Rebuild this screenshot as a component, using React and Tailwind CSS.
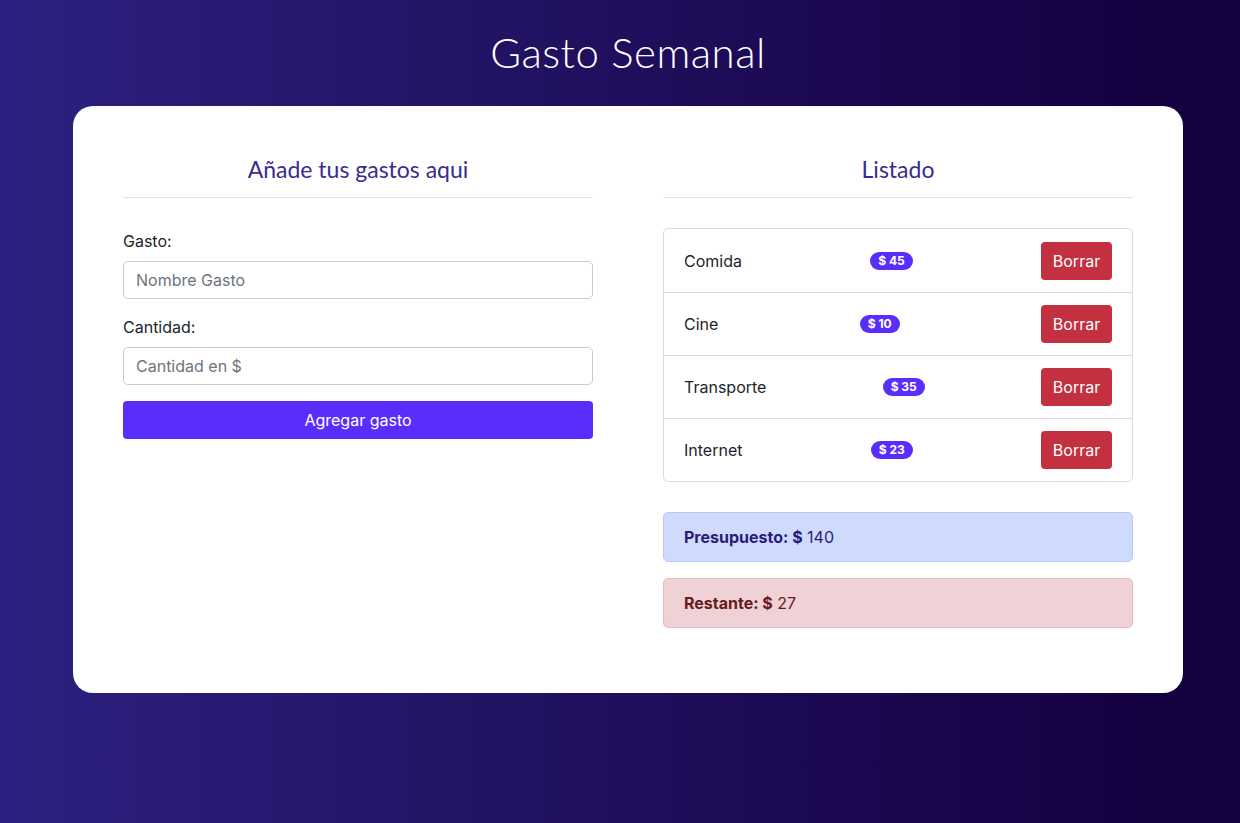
export default function App() {
  const items = [
    { n: "Comida", v: 45 },
    { n: "Cine", v: 10 },
    { n: "Transporte", v: 35 },
    { n: "Internet", v: 23 },
  ];
  const body = { fontFamily: "Inter, 'Noto Sans', sans-serif" };
  const head = { fontFamily: "Lato, 'Noto Sans', sans-serif" };
  return (
    <div className="min-h-[823px] w-full bg-gradient-to-r from-[#2c2180] to-[#13003c] pt-[26px]" style={body}>
      <div className="ml-[73px] w-[1110px]">
        <h1 className="text-center text-[42px] leading-[52px] font-light text-white tracking-[0.5px]" style={head}>
          Gasto Semanal
        </h1>
        <div className="mt-[28px] h-[587px] rounded-[20px] bg-white px-[50px] pt-[50px]">
          <div className="grid grid-cols-2 gap-[70px]">
            <div>
              <h2 className="text-center text-[23px] leading-[26px] text-[#3a2d8e] pb-[15px] border-b border-[#e3e3e3]" style={head}>
                Añade tus gastos aqui
              </h2>
              <div className="mt-[31px] text-[16px] text-[#212529]">
                <label className="block leading-[24px]">Gasto:</label>
                <input
                  className="mt-[8px] block h-[38px] w-full rounded-[5px] border border-[#cbcbd6] px-[12px] text-[16px] placeholder-[#6c757d] outline-none"
                  placeholder="Nombre Gasto"
                />
                <label className="mt-[16px] block leading-[24px]">Cantidad:</label>
                <input
                  className="mt-[8px] block h-[38px] w-full rounded-[5px] border border-[#cbcbd6] px-[12px] text-[16px] placeholder-[#6c757d] outline-none"
                  placeholder="Cantidad en $"
                />
                <button className="mt-[16px] block h-[38px] w-full rounded-[4px] bg-[#5b2dfd] text-[16px] text-white">
                  Agregar gasto
                </button>
              </div>
            </div>
            <div>
              <h2 className="text-center text-[23px] leading-[26px] text-[#3a2d8e] pb-[15px] border-b border-[#e3e3e3]" style={head}>
                Listado
              </h2>
              <ul className="mt-[30px] rounded-[5px] border border-[#dcdcdc]">
                {items.map((it, i) => (
                  <li
                    key={it.n}
                    className={`flex h-[63px] items-center justify-between px-[20px] text-[16px] text-[#212529] ${i > 0 ? "border-t border-[#dcdcdc]" : ""}`}
                  >
                    <span>{it.n}</span>
                    <span className="rounded-full bg-[#5b2dfd] px-[8px] text-[12px] leading-[18px] font-bold text-white">
                      $ {it.v}
                    </span>
                    <button className="h-[38px] w-[71px] rounded-[4px] bg-[#c3303f] text-[16px] text-white">Borrar</button>
                  </li>
                ))}
              </ul>
              <div className="mt-[30px] flex h-[50px] items-center rounded-[5px] border border-[#b9c8fb] bg-[#cfdbfd] px-[20px] text-[16px] text-[#2a1b7b]">
                <b className="font-bold">Presupuesto: $</b>&nbsp;140
              </div>
              <div className="mt-[16px] flex h-[50px] items-center rounded-[5px] border border-[#e8b9c0] bg-[#f0d2d6] px-[20px] text-[16px] text-[#681a22]">
                <b className="font-bold">Restante: $</b>&nbsp;27
              </div>
            </div>
          </div>
        </div>
      </div>
    </div>
  );
}
